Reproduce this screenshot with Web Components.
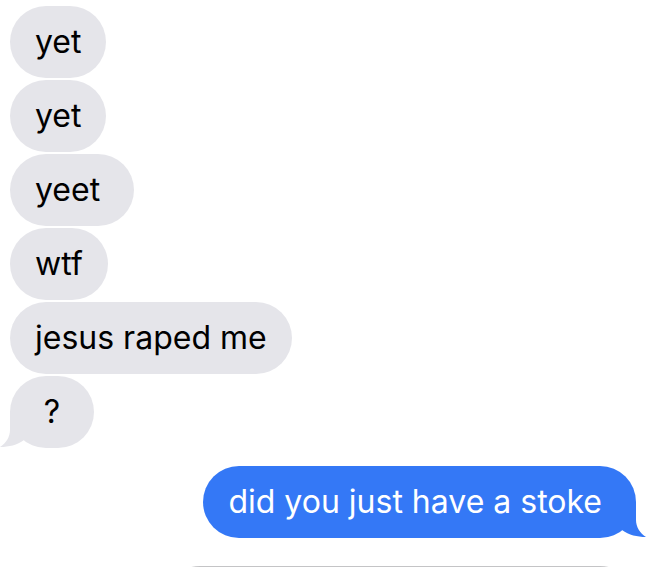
<!DOCTYPE html>
<html lang="en">
<head>
<meta charset="utf-8">
<meta name="viewport" content="width=device-width, initial-scale=1">
<title>Messages</title>
<style>
html, body { margin: 0; height: 100%; background: #fff; }
body { font-family: Inter, "Liberation Sans", sans-serif; }
</style>
</head>
<body>
<chat-thread>
  <chat-bubble>yet</chat-bubble>
  <chat-bubble>yet</chat-bubble>
  <chat-bubble>yeet&nbsp;</chat-bubble>
  <chat-bubble>wtf</chat-bubble>
  <chat-bubble>jesus raped me</chat-bubble>
  <chat-bubble tail>?</chat-bubble>
  <chat-bubble sent tail>did you just have a stoke&nbsp;</chat-bubble>
  <chat-card></chat-card>
</chat-thread>
<script>
class ChatThread extends HTMLElement {
  constructor() {
    super();
    this.attachShadow({ mode: "open" }).innerHTML = `
      <style>
        :host {
          display: flex; flex-direction: column; align-items: flex-start; gap: 2px;
          box-sizing: border-box; height: 100vh; padding: 6px 10px 0; overflow: hidden;
        }
        ::slotted(*) { flex: none; }
      </style>
      <slot></slot>`;
  }
}
class ChatBubble extends HTMLElement {
  constructor() {
    super();
    this.attachShadow({ mode: "open" }).innerHTML = `
      <style>
        :host {
          display: block; position: relative; box-sizing: border-box;
          min-width: 84px; padding: 15px 25px; border-radius: 36px;
          background: var(--fill); color: #000; text-align: center;
          font-size: 32px; line-height: 42px; --fill: #e5e5ea;
        }
        :host([sent]) { --fill: #3478f6; color: #fff; align-self: flex-end; margin-top: 16px; }
        svg { display: none; position: absolute; left: -10px; bottom: 0; fill: var(--fill); }
        :host([tail]) svg { display: block; }
        :host([sent]) svg { left: auto; right: -10px; transform: scaleX(-1); }
      </style>
      <slot></slot>
      <svg width="24" height="36" viewBox="0 0 24 36" aria-hidden="true">
        <path d="M10 0V18C10 25 6 31 0 35C9 35 17 33 24 28V0Z"/>
      </svg>`;
  }
}
class ChatCard extends HTMLElement {
  constructor() {
    super();
    this.attachShadow({ mode: "open" }).innerHTML = `
      <style>
        :host {
          display: block; box-sizing: border-box; align-self: stretch; height: 72px;
          margin: 26px 0 0 154px; border: 2px solid #c4c4c6; border-radius: 36px;
        }
      </style>
      <slot></slot>`;
  }
}
customElements.define("chat-thread", ChatThread);
customElements.define("chat-bubble", ChatBubble);
customElements.define("chat-card", ChatCard);
</script>
</body>
</html>
